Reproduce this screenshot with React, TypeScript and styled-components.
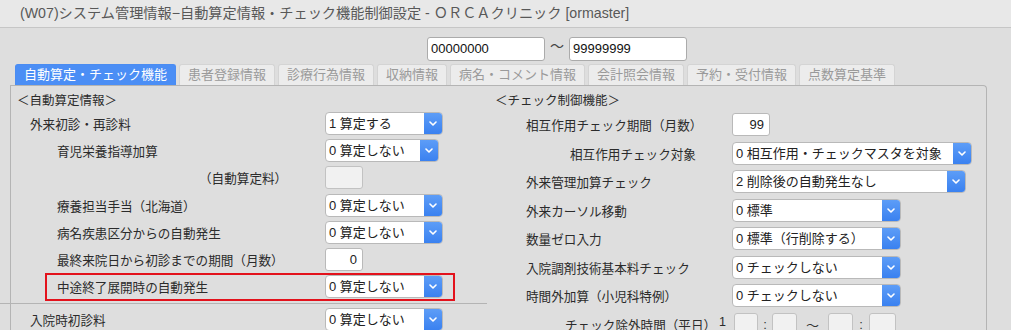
import React from 'react';
import styled, { createGlobalStyle } from 'styled-components';

const GlobalStyle = createGlobalStyle`
  html, body { margin: 0; padding: 0; background: #dedede; }
  body {
    font-family: "Liberation Sans", "Noto Sans CJK JP", sans-serif;
    color: #333;
    overflow: hidden;
  }
`;

const Page = styled.div`
  width: 1011px;
  height: 330px;
  overflow: hidden;
  background: #dedede;
`;

const TitleBar = styled.div`
  height: 28px;
  box-sizing: border-box;
  background: #e8e8e8;
  border-bottom: 1px solid #c6c6c6;
  padding-left: 20px;
  font-size: 14.2px;
  line-height: 27px;
  color: #585858;
  white-space: nowrap;
`;

const RangeRow = styled.div`
  display: flex;
  align-items: center;
  margin-top: 9px;
  padding-left: 427px;
  height: 24px;
`;

const RangeInput = styled.div`
  box-sizing: border-box;
  width: 118px;
  height: 24px;
  background: #fff;
  border: 1px solid #ababab;
  border-radius: 3px;
  padding-left: 3px;
  font-size: 13px;
  line-height: 22px;
  color: #111;
`;

const Tilde = styled.span`
  width: 24px;
  text-align: center;
  font-size: 14px;
  color: #444;
  line-height: 16px;
  margin-top: -6px;
`;

const TabBar = styled.div`
  display: flex;
  gap: 3px;
  margin-top: 3px;
  padding-left: 15px;
`;

const Tab = styled.div<{ $active?: boolean }>`
  box-sizing: border-box;
  height: 21px;
  padding: 0 8px;
  border: 1px solid ${(p) => (p.$active ? '#4a8cf2' : '#d4d4d4')};
  border-bottom: none;
  border-radius: 3px 3px 0 0;
  background: ${(p) => (p.$active ? '#4b8ef5' : '#ececec')};
  color: ${(p) => (p.$active ? '#fff' : '#9a9a9a')};
  font-size: 13px;
  line-height: 20px;
  white-space: nowrap;
`;

const Panel = styled.div`
  box-sizing: border-box;
  margin-left: 10px;
  width: 977px;
  height: 400px;
  border: 1px solid #b4b4b4;
  border-bottom: none;
  border-radius: 0 4px 0 0;
  display: flex;
`;

const Column = styled.div<{ $width?: number; $gap: number }>`
  display: flex;
  flex-direction: column;
  gap: ${(p) => p.$gap}px;
  padding-top: 6px;
  ${(p) => (p.$width ? `width: ${p.$width}px;` : 'flex: 1;')}
`;

const SectionHeader = styled.div<{ $indent: number; $after: number }>`
  height: 18px;
  line-height: 18px;
  font-size: 12.5px;
  padding-left: ${(p) => p.$indent}px;
  margin-bottom: ${(p) => p.$after}px;
  color: #2b2b2b;
`;

const Row = styled.div<{ $labelWidth: number; $highlight?: boolean }>`
  position: relative;
  display: grid;
  grid-template-columns: ${(p) => p.$labelWidth}px auto;
  align-items: center;
  height: 23px;
  ${(p) =>
    p.$highlight
      ? `&::after {
      content: '';
      position: absolute;
      left: 34px;
      top: -2px;
      width: 410px;
      height: 28px;
      box-sizing: border-box;
      border: 2px solid #e3121c;
      pointer-events: none;
    }`
      : ''}
`;

const Label = styled.div<{ $indent: number }>`
  display: flex;
  justify-content: space-between;
  padding-left: ${(p) => p.$indent}px;
  padding-right: 6px;
  font-size: 12.6px;
  color: #2b2b2b;
  white-space: nowrap;
`;

const SelectBox = styled.div<{ $width: number }>`
  box-sizing: border-box;
  width: ${(p) => p.$width}px;
  height: 23px;
  display: flex;
  background: #fff;
  border: 1px solid #b9b9b9;
  border-radius: 4px;
  overflow: hidden;
`;

const SelectText = styled.div`
  flex: 1;
  padding-left: 3px;
  font-size: 13px;
  line-height: 21px;
  color: #222;
  white-space: nowrap;
`;

const SelectButton = styled.div`
  width: 18px;
  display: flex;
  align-items: center;
  justify-content: center;
  background: linear-gradient(#5d9df7, #3a81f0);
`;

const NumberBox = styled.div`
  box-sizing: border-box;
  width: 38px;
  height: 23px;
  background: #fff;
  border: 1px solid #b9b9b9;
  border-radius: 3px;
  padding-right: 5px;
  text-align: right;
  font-size: 13px;
  line-height: 21px;
  color: #222;
`;

const EmptyBox = styled.div<{ $width: number }>`
  box-sizing: border-box;
  width: ${(p) => p.$width}px;
  height: 23px;
  background: #f1f1f1;
  border: 1px solid #c2c2c2;
  border-radius: 3px;
`;

const TimeGroup = styled.div`
  display: flex;
  align-items: center;
  padding-left: 2px;
`;

const Sep = styled.span<{ $width: number }>`
  width: ${(p) => p.$width}px;
  text-align: center;
  font-size: 13px;
  color: #333;
`;

const Divider = styled.div`
  height: 1px;
  background: #b4b4b4;
  margin-left: -11px;
  margin-top: 0.8px;
`;

const Chevron = () => (
  <svg width="8" height="5" viewBox="0 0 8 5">
    <path d="M1 1 L4 4 L7 1" fill="none" stroke="#fff" strokeWidth="1.6" strokeLinecap="round" strokeLinejoin="round" />
  </svg>
);

const Select = ({ value, width }: { value: string; width: number }) => (
  <SelectBox $width={width}>
    <SelectText>{value}</SelectText>
    <SelectButton>
      <Chevron />
    </SelectButton>
  </SelectBox>
);

const tabs = ['自動算定・チェック機能', '患者登録情報', '診療行為情報', '収納情報', '病名・コメント情報', '会計照会情報', '予約・受付情報', '点数算定基準'];

export default function App() {
  const L = 314;
  const R = 245;
  return (
    <Page>
      <GlobalStyle />
      <TitleBar>(W07)システム管理情報−自動算定情報・チェック機能制御設定 - ＯＲＣＡクリニック [ormaster]</TitleBar>
      <RangeRow>
        <RangeInput>00000000</RangeInput>
        <Tilde>〜</Tilde>
        <RangeInput>99999999</RangeInput>
      </RangeRow>
      <TabBar>
        {tabs.map((t, i) => (
          <Tab key={t} $active={i === 0}>
            {t}
          </Tab>
        ))}
      </TabBar>
      <Panel>
        <Column $width={476} $gap={4.2}>
          <SectionHeader $indent={6} $after={-2.2}>＜自動算定情報＞</SectionHeader>
          <Row $labelWidth={L}>
            <Label $indent={19}>外来初診・再診料</Label>
            <Select value="1 算定する" width={118} />
          </Row>
          <Row $labelWidth={L}>
            <Label $indent={46}>育児栄養指導加算</Label>
            <Select value="0 算定しない" width={114} />
          </Row>
          <Row $labelWidth={L}>
            <Label $indent={188}>（自動算定料）</Label>
            <EmptyBox $width={38} />
          </Row>
          <Row $labelWidth={L}>
            <Label $indent={46}>療養担当手当（北海道）</Label>
            <Select value="0 算定しない" width={118} />
          </Row>
          <Row $labelWidth={L}>
            <Label $indent={46}>病名疾患区分からの自動発生</Label>
            <Select value="0 算定しない" width={118} />
          </Row>
          <Row $labelWidth={L}>
            <Label $indent={46}>最終来院日から初診までの期間（月数）</Label>
            <NumberBox>0</NumberBox>
          </Row>
          <Row $labelWidth={L} $highlight>
            <Label $indent={46}>中途終了展開時の自動発生</Label>
            <Select value="0 算定しない" width={118} />
          </Row>
          <Divider />
          <Row $labelWidth={L}>
            <Label $indent={19}>入院時初診料</Label>
            <Select value="0 算定しない" width={118} />
          </Row>
        </Column>
        <Column $gap={5.5}>
          <SectionHeader $indent={8} $after={-2.5}>＜チェック制御機能＞</SectionHeader>
          <Row $labelWidth={R}>
            <Label $indent={39}>相互作用チェック期間（月数）</Label>
            <NumberBox>99</NumberBox>
          </Row>
          <Row $labelWidth={R}>
            <Label $indent={83}>相互作用チェック対象</Label>
            <Select value="0 相互作用・チェックマスタを対象" width={240} />
          </Row>
          <Row $labelWidth={R}>
            <Label $indent={39}>外来管理加算チェック</Label>
            <Select value="2 削除後の自動発生なし" width={234} />
          </Row>
          <Row $labelWidth={R}>
            <Label $indent={39}>外来カーソル移動</Label>
            <Select value="0 標準" width={169} />
          </Row>
          <Row $labelWidth={R}>
            <Label $indent={39}>数量ゼロ入力</Label>
            <Select value="0 標準（行削除する）" width={169} />
          </Row>
          <Row $labelWidth={R}>
            <Label $indent={39}>入院調剤技術基本料チェック</Label>
            <Select value="0 チェックしない" width={169} />
          </Row>
          <Row $labelWidth={R}>
            <Label $indent={39}>時間外加算（小児科特例）</Label>
            <Select value="0 チェックしない" width={169} />
          </Row>
          <Row $labelWidth={R}>
            <Label $indent={78}>
              <span>チェック除外時間（平日）</span>
              <span>1</span>
            </Label>
            <TimeGroup>
              <EmptyBox $width={24} />
              <Sep $width={14}>:</Sep>
              <EmptyBox $width={25} />
              <Sep $width={31}>〜</Sep>
              <EmptyBox $width={25} />
              <Sep $width={16}>:</Sep>
              <EmptyBox $width={27} />
            </TimeGroup>
          </Row>
        </Column>
      </Panel>
    </Page>
  );
}
